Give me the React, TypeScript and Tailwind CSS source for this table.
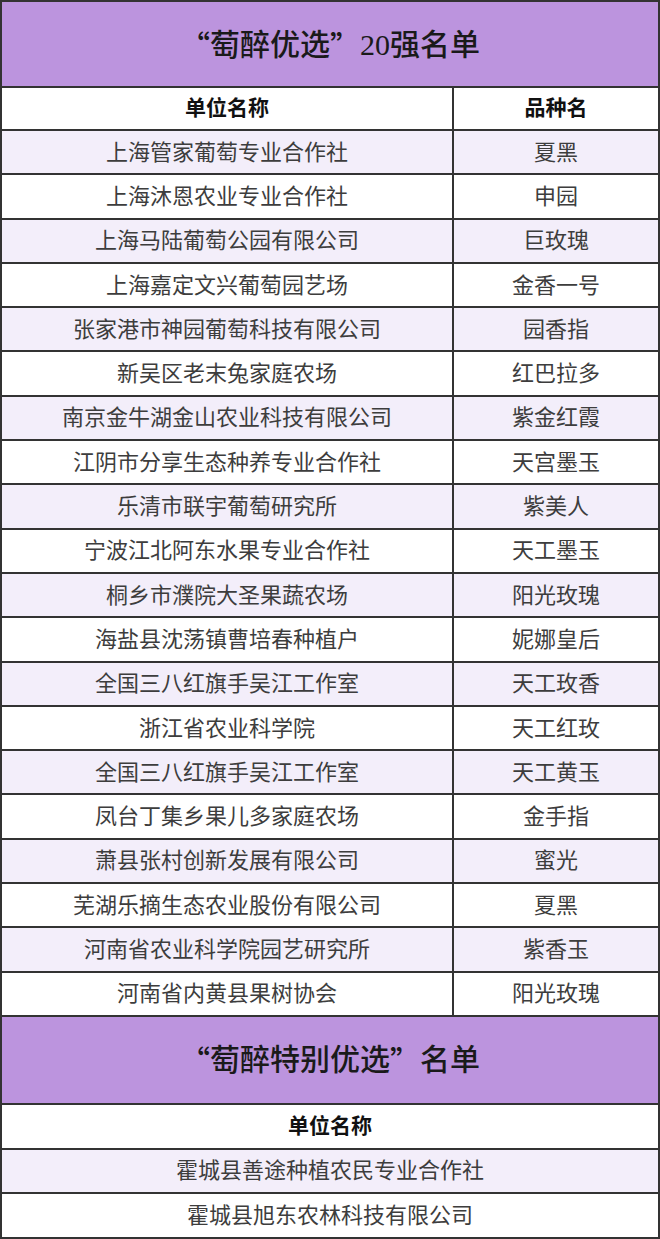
const rows: [string, string][] = [
  ["上海管家葡萄专业合作社", "夏黑"],
  ["上海沐恩农业专业合作社", "申园"],
  ["上海马陆葡萄公园有限公司", "巨玫瑰"],
  ["上海嘉定文兴葡萄园艺场", "金香一号"],
  ["张家港市神园葡萄科技有限公司", "园香指"],
  ["新吴区老末兔家庭农场", "红巴拉多"],
  ["南京金牛湖金山农业科技有限公司", "紫金红霞"],
  ["江阴市分享生态种养专业合作社", "天宫墨玉"],
  ["乐清市联宇葡萄研究所", "紫美人"],
  ["宁波江北阿东水果专业合作社", "天工墨玉"],
  ["桐乡市濮院大圣果蔬农场", "阳光玫瑰"],
  ["海盐县沈荡镇曹培春种植户", "妮娜皇后"],
  ["全国三八红旗手吴江工作室", "天工玫香"],
  ["浙江省农业科学院", "天工红玫"],
  ["全国三八红旗手吴江工作室", "天工黄玉"],
  ["凤台丁集乡果儿多家庭农场", "金手指"],
  ["萧县张村创新发展有限公司", "蜜光"],
  ["芜湖乐摘生态农业股份有限公司", "夏黑"],
  ["河南省农业科学院园艺研究所", "紫香玉"],
  ["河南省内黄县果树协会", "阳光玫瑰"],
];

const special = ["霍城县善途种植农民专业合作社", "霍城县旭东农林科技有限公司"];

function Q({ children }: { children: string }) {
  return <span className="font-['Noto_Sans_CJK_SC',sans-serif]">{children}</span>;
}

export default function App() {
  return (
    <div className="w-[660px] h-[1239px] bg-white border-x-2 border-b-2 border-[#333] font-['Liberation_Serif','Noto_Sans_CJK_SC',serif] text-[#3d3d3d]">
      <div className="h-[88px] bg-[#bc94de] border-t-2 border-b-2 border-[#333] flex items-center justify-center text-[30px] font-medium text-[#1a1a1a]">
        <Q>“</Q>萄醉优选<Q>”</Q>20强名单
      </div>
      <div className="h-[43px] grid grid-cols-[452px_1fr] border-b-2 border-[#333] text-[21px] font-bold text-[#111]">
        <div className="flex items-center justify-center border-r-2 border-[#333]">单位名称</div>
        <div className="flex items-center justify-center">品种名</div>
      </div>
      {rows.map(([name, kind], i) => (
        <div
          key={i}
          className={
            "h-[44.3px] grid grid-cols-[452px_1fr] border-b-2 border-[#333] text-[22px] " +
            (i % 2 === 0 ? "bg-[#f3eefa]" : "bg-white")
          }
        >
          <div className="flex items-center justify-center border-r-2 border-[#333]">{name}</div>
          <div className="flex items-center justify-center">{kind}</div>
        </div>
      ))}
      <div className="h-[88px] bg-[#bc94de] border-b-2 border-[#333] flex items-center justify-center text-[30px] font-medium text-[#1a1a1a]">
        <Q>“</Q>萄醉特别优选<Q>”</Q>名单
      </div>
      <div className="h-[45px] border-b-2 border-[#333] flex items-center justify-center text-[21px] font-bold text-[#111]">
        单位名称
      </div>
      {special.map((name, i) => (
        <div
          key={i}
          className={
            "flex items-center justify-center text-[22px] " +
            (i === 0 ? "h-[44px] border-b-2 border-[#333] bg-[#f3eefa]" : "h-[43px] bg-white")
          }
        >
          {name}
        </div>
      ))}
    </div>
  );
}
